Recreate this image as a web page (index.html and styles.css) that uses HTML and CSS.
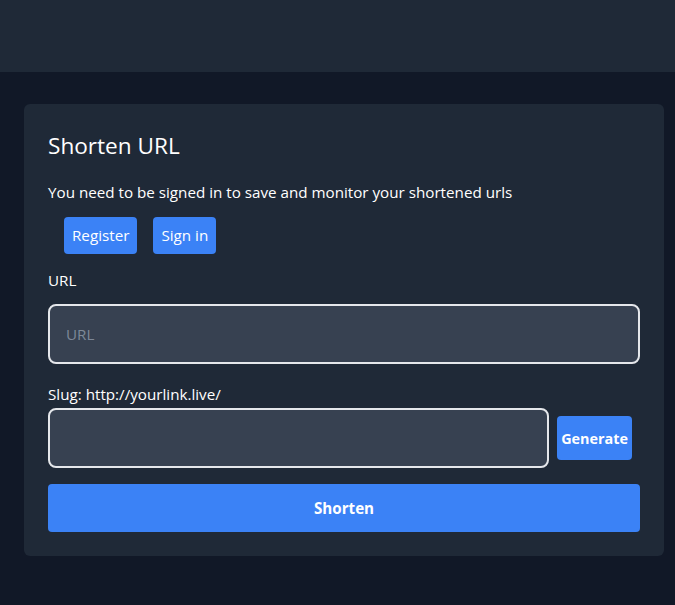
FILE: index.html
```html
<!DOCTYPE html>
<html lang="en">
<head>
<meta charset="utf-8">
<title>Shorten URL</title>
<link rel="stylesheet" href="styles.css">
</head>
<body>
<header class="topbar"></header>
<main class="main">
  <section class="card">
    <h1 class="title">Shorten URL</h1>
    <p class="notice">You need to be signed in to save and monitor your shortened urls</p>
    <div class="auth">
      <button class="btn btn-sm">Register</button>
      <button class="btn btn-sm">Sign in</button>
    </div>
    <label class="label" for="url">URL</label>
    <input id="url" class="input" type="text" placeholder="URL">
    <label class="label label-slug" for="slug">Slug: http://yourlink.live/</label>
    <div class="slug-row">
      <input id="slug" class="input input-slug" type="text">
      <button class="btn btn-gen">Generate</button>
    </div>
    <button class="btn btn-submit">Shorten</button>
  </section>
</main>
</body>
</html>
```
FILE: styles.css
```css
html, body {
  margin: 0;
  padding: 0;
}
body {
  background: #111827;
  color: #ffffff;
  font-family: "Open Sans", "Noto Sans", sans-serif;
  font-size: 15.2px;
  height: 605px;
}
.topbar {
  height: 72px;
  background: #1f2937;
}
.main {
  padding: 32px 11px 0 24px;
}
.card {
  background: #1f2937;
  border-radius: 6px;
  padding: 24px;
  display: flex;
  flex-direction: column;
}
.title {
  margin: 0;
  font-size: 22.6px;
  font-weight: 400;
  line-height: 32px;
  margin-top: 2px;
}
.notice {
  margin: 18px 0 0;
  line-height: 24px;
}
.auth {
  display: flex;
  gap: 16px;
  margin: 13px 0 0 16px;
}
.btn {
  background: #3b82f6;
  color: #ffffff;
  border: none;
  font-family: inherit;
  cursor: pointer;
}
.btn-sm {
  font-size: 15.2px;
  padding: 8px 8px;
  line-height: 21px;
  border-radius: 4px;
}
.label {
  margin-top: 14px;
  line-height: 24px;
}
.input {
  margin-top: 12px;
  height: 60px;
  box-sizing: border-box;
  background: #374151;
  border: 2px solid #e5e7eb;
  border-radius: 8px;
  padding: 0 16px;
  font-family: inherit;
  font-size: 15.2px;
  color: #ffffff;
  outline: none;
}
.input::placeholder {
  color: #7d8898;
}
.label-slug {
  margin-top: 18px;
}
.slug-row {
  display: flex;
  align-items: center;
  margin-top: 2px;
}
.input-slug {
  margin-top: 0;
  flex: 1;
  min-width: 0;
}
.btn-gen {
  margin: 0 8px;
  height: 44px;
  padding: 0 4px;
  font-weight: 700;
  font-size: 14.4px;
  border-radius: 4px;
}
.btn-submit {
  margin-top: 16px;
  height: 48px;
  font-weight: 700;
  font-size: 15.2px;
  border-radius: 4px;
}
```
